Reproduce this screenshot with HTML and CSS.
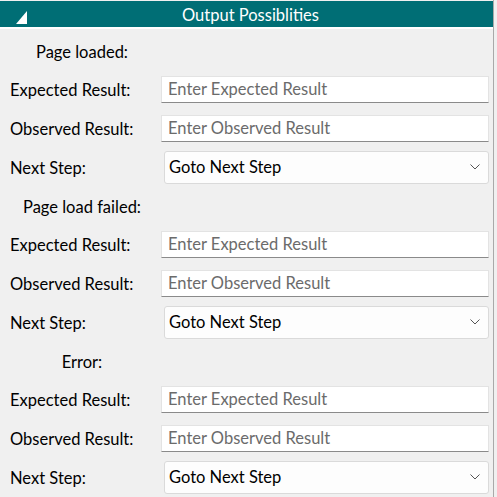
FILE: index.html
```html
<!DOCTYPE html>
<html>
<head>
<meta charset="utf-8">
<link rel="stylesheet" href="styles.css">
</head>
<body>
<div class="panel">
  <div class="titlebar">
    <svg class="tri" width="12" height="14" viewBox="0 0 12 14"><polygon points="11,0 11,13 0,13" fill="#fff"/></svg>
    <span class="title">Output Possiblities</span>
  </div>
  <div class="form">
    <div class="section">
      <div class="head">Page loaded:</div>
      <div class="row"><span class="label">Expected Result:</span><input class="field" placeholder="Enter Expected Result"></div>
      <div class="row"><span class="label">Observed Result:</span><input class="field" placeholder="Enter Observed Result"></div>
      <div class="row"><span class="label">Next Step:</span><div class="select"><span>Goto Next Step</span><svg width="10" height="6" viewBox="0 0 10 6"><polyline points="0.5,0.5 5,5 9.5,0.5" fill="none" stroke="#555" stroke-width="1"/></svg></div></div>
    </div>
    <div class="section">
      <div class="head">Page load failed:</div>
      <div class="row"><span class="label">Expected Result:</span><input class="field" placeholder="Enter Expected Result"></div>
      <div class="row"><span class="label">Observed Result:</span><input class="field" placeholder="Enter Observed Result"></div>
      <div class="row"><span class="label">Next Step:</span><div class="select"><span>Goto Next Step</span><svg width="10" height="6" viewBox="0 0 10 6"><polyline points="0.5,0.5 5,5 9.5,0.5" fill="none" stroke="#555" stroke-width="1"/></svg></div></div>
    </div>
    <div class="section">
      <div class="head">Error:</div>
      <div class="row"><span class="label">Expected Result:</span><input class="field" placeholder="Enter Expected Result"></div>
      <div class="row"><span class="label">Observed Result:</span><input class="field" placeholder="Enter Observed Result"></div>
      <div class="row"><span class="label">Next Step:</span><div class="select"><span>Goto Next Step</span><svg width="10" height="6" viewBox="0 0 10 6"><polyline points="0.5,0.5 5,5 9.5,0.5" fill="none" stroke="#555" stroke-width="1"/></svg></div></div>
    </div>
  </div>
</div>
</body>
</html>
```
FILE: styles.css
```css
html, body {
  margin: 0;
  padding: 0;
  background: #f0f0f0;
  font-family: Lato, "Open Sans", sans-serif;
  font-size: 16.5px;
  color: #000;
  overflow: hidden;
}
.panel {
  width: 494px;
  height: 497px;
  border-right: 1px solid #a9a9a9;
  box-sizing: border-box;
  padding-top: 1px;
}
.titlebar {
  height: 26px;
  background: #006e75;
  border-bottom: 2px solid #ffffff;
  display: flex;
  align-items: center;
  position: relative;
  box-sizing: border-box;
  padding-top: 2px;
}
.titlebar {
  height: 28px;
}
.tri {
  position: absolute;
  left: 16px;
  top: 10px;
}
.title {
  flex: 1;
  text-align: center;
  color: #fff;
  font-size: 16.5px;
  padding-left: 8px;
}
.form {
  padding-top: 3px;
}
.head {
  height: 38px;
  width: 164px;
  display: flex;
  align-items: center;
  justify-content: center;
  padding-top: 1px;
  box-sizing: border-box;
}
.row {
  height: 39px;
  display: flex;
  align-items: center;
}
.label {
  width: 151px;
  padding-left: 10px;
}
.field {
  width: 328px;
  height: 27px;
  box-sizing: border-box;
  margin: 0;
  margin-top: -1px;
  border: 1px solid #e3e3e3;
  border-bottom: 1px solid #8a8a8a;
  background: #fff;
  font-family: inherit;
  font-size: 16.5px;
  padding: 0 6px;
  outline: none;
}
.field::placeholder {
  color: #6b6b6b;
}
.select {
  margin-left: 3px;
  width: 325px;
  height: 33px;
  box-sizing: border-box;
  border: 1px solid #dadada;
  border-radius: 3px;
  background: #fdfdfd;
  display: flex;
  align-items: center;
  justify-content: space-between;
  padding: 0 8px 0 4px;
  margin-top: -1px;
}
```
